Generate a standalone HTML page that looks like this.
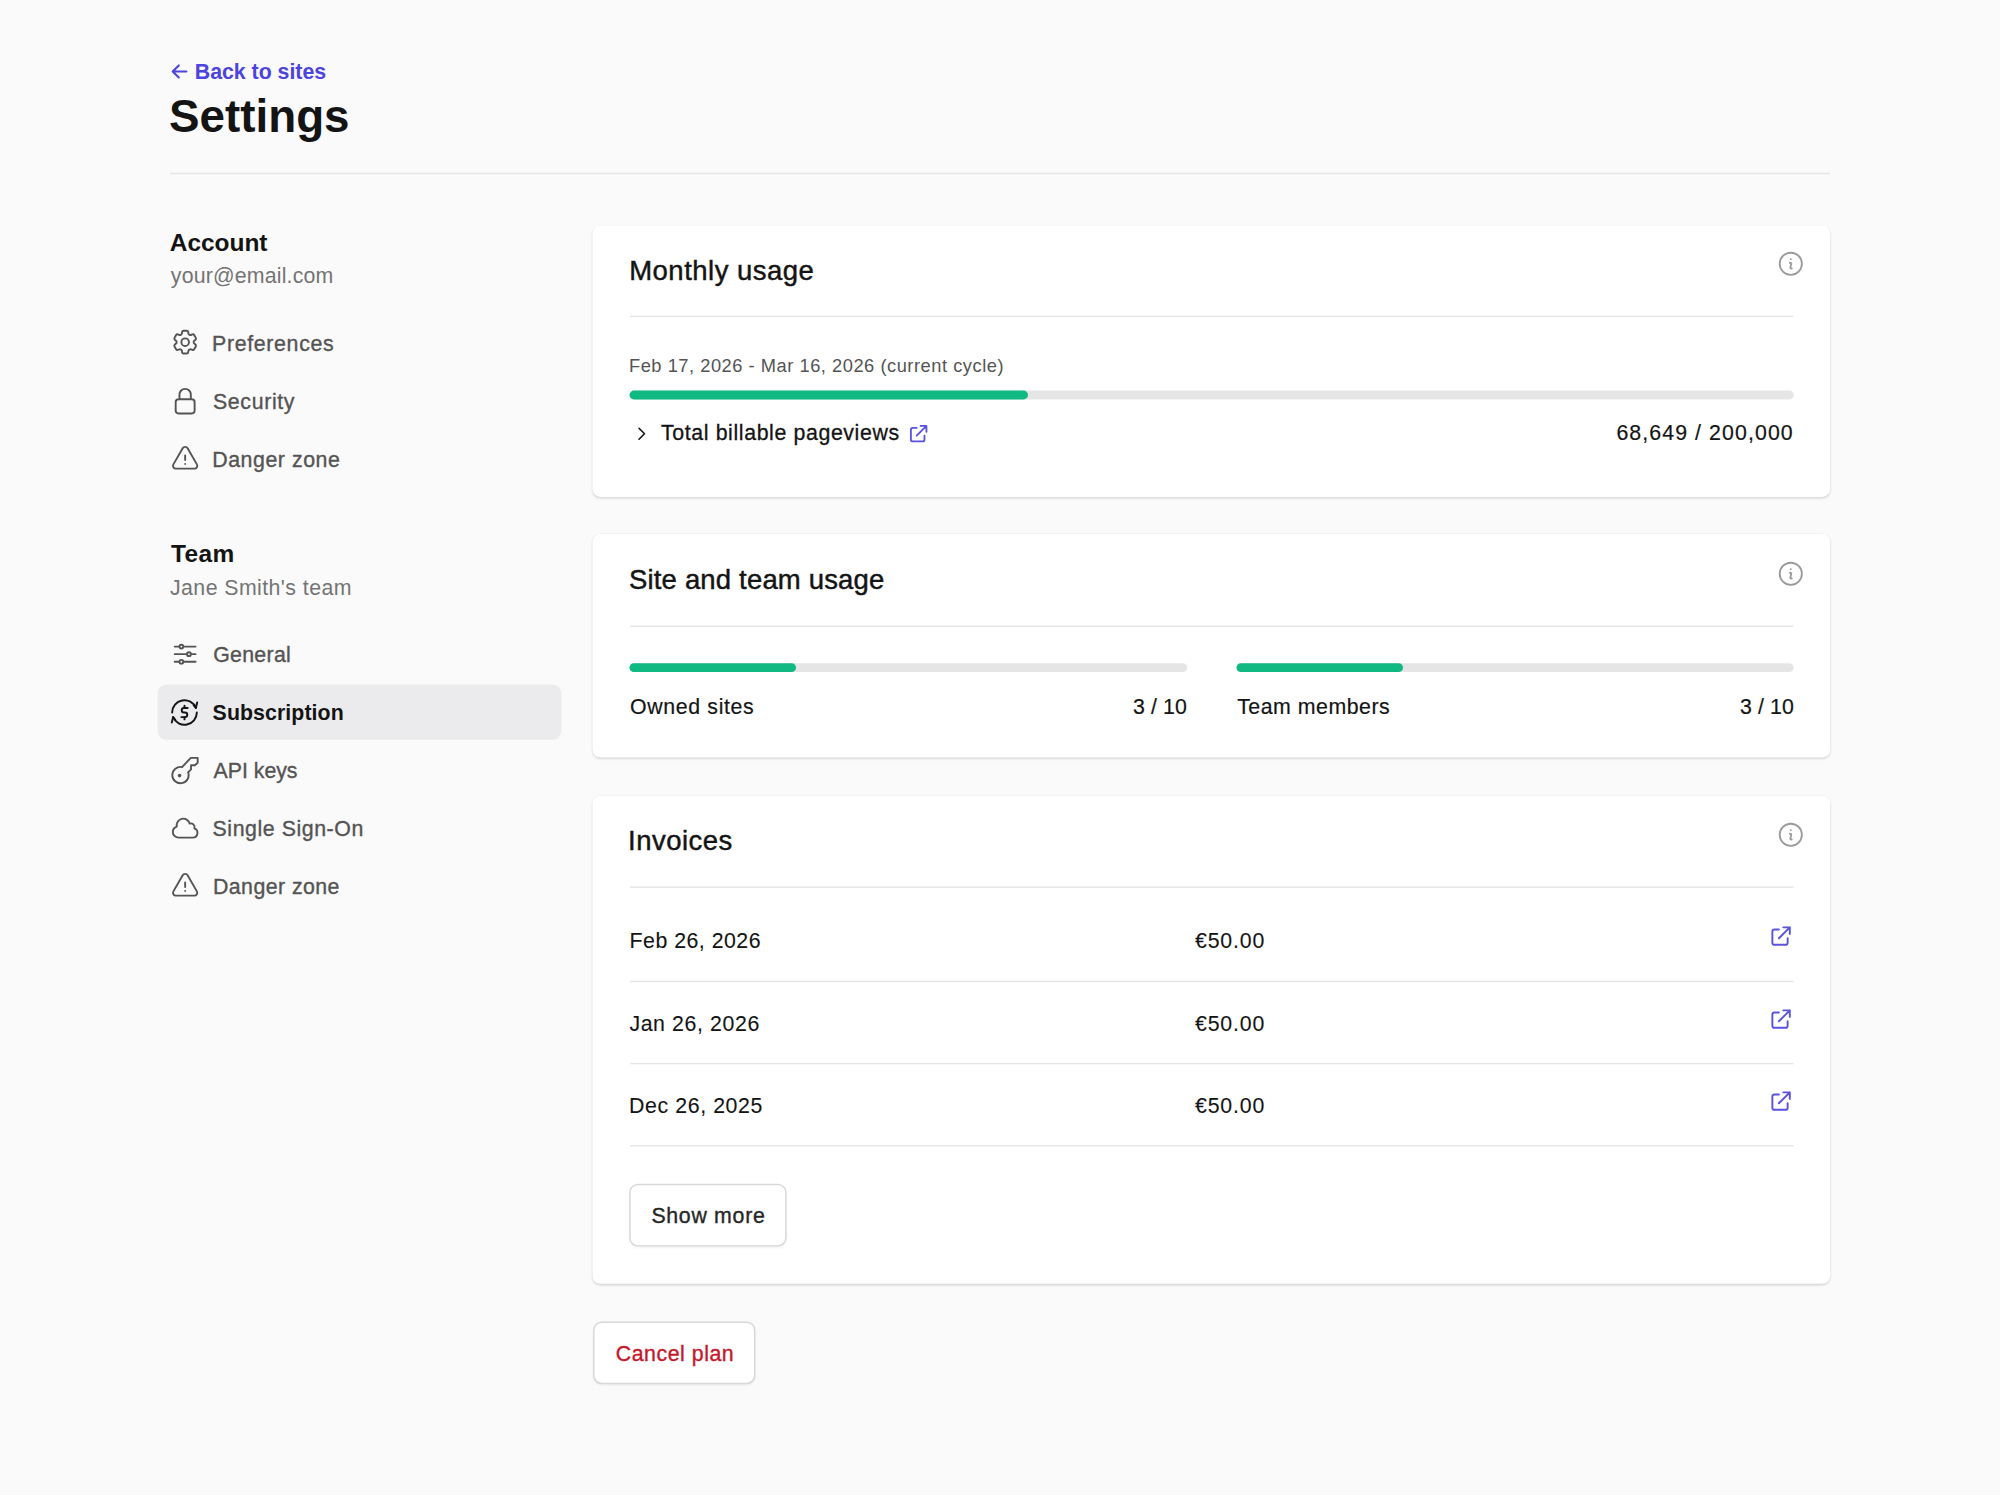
<!DOCTYPE html>
<html lang="en"><head><meta charset="utf-8"><title>Settings</title>
<style>
html,body{margin:0;padding:0}
body{width:2000px;height:1495px;background:#fafafa;position:relative;overflow:hidden;font-family:'Liberation Sans', sans-serif;}
.t{position:absolute;display:block;margin:0;padding:0;white-space:pre;line-height:1;font-family:'Liberation Sans', sans-serif;text-decoration:none;}
svg{position:absolute;overflow:visible}
</style></head><body>
<svg class="bg" width="2000" height="1495" viewBox="0 0 2000 1495" style="left:0;top:0">
<defs><filter id="sh" x="-5%" y="-20%" width="110%" height="140%"><feGaussianBlur stdDeviation="1.1"/></filter></defs>
<rect x="170" y="172.78" width="1660.00" height="1.45" fill="#e5e5e5"/>
<rect x="157.7" y="684.5" width="403.6" height="55.2" rx="8.7" fill="#ebebed"/>
<rect x="592.4" y="227.10" width="1237.90" height="271.40" rx="8" fill="#000" opacity="0.13" filter="url(#sh)"/>
<rect x="591.8" y="224.90" width="1239.10" height="272.60" rx="8.6" fill="#000" opacity="0.035"/>
<rect x="592.4" y="225.5" width="1237.90" height="271.40" rx="8" fill="#fff"/>
<rect x="592.4" y="535.50" width="1237.90" height="223.60" rx="8" fill="#000" opacity="0.13" filter="url(#sh)"/>
<rect x="591.8" y="533.30" width="1239.10" height="224.80" rx="8.6" fill="#000" opacity="0.035"/>
<rect x="592.4" y="533.9" width="1237.90" height="223.60" rx="8" fill="#fff"/>
<rect x="592.4" y="797.30" width="1237.90" height="488.10" rx="8" fill="#000" opacity="0.13" filter="url(#sh)"/>
<rect x="591.8" y="795.10" width="1239.10" height="489.30" rx="8.6" fill="#000" opacity="0.035"/>
<rect x="592.4" y="795.7" width="1237.90" height="488.10" rx="8" fill="#fff"/>
<rect x="630" y="315.67" width="1163.50" height="1.45" fill="#e5e5e5"/>
<rect x="630" y="625.57" width="1163.50" height="1.45" fill="#e5e5e5"/>
<rect x="630" y="886.38" width="1163.50" height="1.45" fill="#e5e5e5"/>
<rect x="630" y="980.67" width="1163.50" height="1.45" fill="#e5e5e5"/>
<rect x="630" y="1062.88" width="1163.50" height="1.45" fill="#e5e5e5"/>
<rect x="630" y="1145.08" width="1163.50" height="1.45" fill="#e5e5e5"/>
<rect x="629.5" y="390.6" width="1164.20" height="8.8" rx="4.4" fill="#e5e5e5"/>
<rect x="629.5" y="390.6" width="398.50" height="8.8" rx="4.4" fill="#10b981"/>
<rect x="629.5" y="663.3" width="557.70" height="8.8" rx="4.4" fill="#e5e5e5"/>
<rect x="629.5" y="663.3" width="166.50" height="8.8" rx="4.4" fill="#10b981"/>
<rect x="1236.5" y="663.3" width="557.20" height="8.8" rx="4.4" fill="#e5e5e5"/>
<rect x="1236.5" y="663.3" width="166.50" height="8.8" rx="4.4" fill="#10b981"/>
<rect x="629.2" y="1185.20" width="157.40" height="62.80" rx="8.7" fill="#000" opacity="0.05" filter="url(#sh)"/>
<rect x="629.93" y="1184.52" width="155.95" height="61.35" rx="7.97" fill="#fff" stroke="#d8d8d8" stroke-width="1.45"/>
<rect x="593.1" y="1322.90" width="162.30" height="62.70" rx="8.7" fill="#000" opacity="0.05" filter="url(#sh)"/>
<rect x="593.83" y="1322.22" width="160.85" height="61.25" rx="7.97" fill="#fff" stroke="#d8d8d8" stroke-width="1.45"/>
</svg>
<!-- back arrow -->
<svg style="left:170px;top:62px" width="19" height="19" viewBox="0 0 19 19" fill="none" stroke="#4c43e0" stroke-width="2.1" stroke-linecap="round" stroke-linejoin="round"><path d="M16.400 9.500H3M8.800 3.400 2.700 9.500l6.100 6.100"/></svg>
<!-- sidebar icons (29px, heroicons outline style) -->
<svg style="left:169.95px;top:327.45px" width="30.3" height="30.3" viewBox="0 0 24 24" fill="none" stroke="#545454" stroke-width="1.5" stroke-linecap="round" stroke-linejoin="round"><path d="M9.594 3.94c.09-.542.56-.94 1.11-.94h2.593c.55 0 1.02.398 1.11.94l.213 1.281c.063.374.313.686.645.87.074.04.147.083.22.127.325.196.72.257 1.075.124l1.217-.456a1.125 1.125 0 0 1 1.37.49l1.296 2.247a1.125 1.125 0 0 1-.26 1.431l-1.003.827c-.293.241-.438.613-.43.992a7.723 7.723 0 0 1 0 .255c-.008.378.137.75.43.991l1.004.827c.424.35.534.955.26 1.43l-1.298 2.247a1.125 1.125 0 0 1-1.369.491l-1.217-.456c-.355-.133-.75-.072-1.076.124a6.47 6.47 0 0 1-.22.128c-.331.183-.581.495-.644.869l-.213 1.281c-.09.543-.56.94-1.11.94h-2.594c-.55 0-1.019-.398-1.11-.94l-.213-1.281c-.062-.374-.312-.686-.644-.87a6.52 6.52 0 0 1-.22-.127c-.325-.196-.72-.257-1.076-.124l-1.217.456a1.125 1.125 0 0 1-1.369-.49l-1.297-2.247a1.125 1.125 0 0 1 .26-1.431l1.004-.827c.292-.24.437-.613.43-.991a6.932 6.932 0 0 1 0-.255c.007-.38-.138-.751-.43-.992l-1.004-.827a1.125 1.125 0 0 1-.26-1.43l1.297-2.247a1.125 1.125 0 0 1 1.37-.491l1.216.456c.356.133.751.072 1.076-.124.072-.044.146-.086.22-.128.332-.183.582-.495.644-.869l.214-1.28Z"/><path d="M15 12a3 3 0 1 1-6 0 3 3 0 0 1 6 0Z"/></svg>
<svg style="left:169.95px;top:385.55px" width="30.3" height="30.3" viewBox="0 0 24 24" fill="none" stroke="#545454" stroke-width="1.5" stroke-linecap="round" stroke-linejoin="round"><path d="M16.5 10.5V6.75a4.5 4.5 0 1 0-9 0v3.75m-.75 11.25h10.5a2.25 2.25 0 0 0 2.25-2.25v-6.75a2.25 2.25 0 0 0-2.25-2.25H6.75a2.25 2.25 0 0 0-2.25 2.25v6.75a2.25 2.25 0 0 0 2.25 2.25Z"/></svg>
<svg style="left:169.95px;top:443.75px" width="30.3" height="30.3" viewBox="0 0 24 24" fill="none" stroke="#545454" stroke-width="1.5" stroke-linecap="round" stroke-linejoin="round"><path d="M12 9v3.75m-9.303 3.376c-.866 1.5.217 3.374 1.948 3.374h14.71c1.73 0 2.813-1.874 1.948-3.374L13.949 3.378c-.866-1.5-3.032-1.5-3.898 0L2.697 16.126ZM12 15.75h.007v.008H12v-.008Z"/></svg>
<svg style="left:169.95px;top:638.55px" width="30.3" height="30.3" viewBox="0 0 24 24" fill="none" stroke="#545454" stroke-width="1.5" stroke-linecap="round" stroke-linejoin="round"><path d="M10.5 6h9.75M10.5 6a1.5 1.5 0 1 1-3 0m3 0a1.5 1.5 0 1 0-3 0M3.75 6H7.5m3 12h9.75m-9.75 0a1.5 1.5 0 0 1-3 0m3 0a1.5 1.5 0 0 0-3 0m-3.75 0H7.5m9-6h3.75m-3.75 0a1.5 1.5 0 0 1-3 0m3 0a1.5 1.5 0 0 0-3 0m-9.75 0h9.75"/></svg>
<!-- subscription icon (custom) -->
<svg style="left:170.3px;top:697.6px" width="29" height="29" viewBox="0 0 24 24" fill="none" stroke="#141414" stroke-width="1.6" stroke-linecap="round" stroke-linejoin="round"><path d="M1.8 12A10.2 10.2 0 0 1 21.4 8.1"/><path d="M22.500 3.700 21.400 8.200 19.600 6"/><path d="M22.2 12A10.2 10.2 0 0 1 2.6 15.9"/><path d="M1.500 20.300 2.600 15.800 4.400 18"/><path d="M14.600 8.200H11.600a1.900 1.900 0 0 0 0 3.800h.8a1.900 1.900 0 0 1 0 3.800H9.400"/><path d="M12 6.300v1.900M12 15.800v1.900"/></svg>
<!-- key icon (custom) -->
<svg style="left:170.3px;top:755.8px" width="29" height="29" viewBox="0 0 24 24" fill="none" stroke="#545454" stroke-width="1.55" stroke-linecap="round" stroke-linejoin="round"><path d="M10 9.200 17.200 1.500H22.900V5.600L20.600 7.700H17.400V11L15 13.500A6.750 6.750 0 1 1 10 9.200Z"/><circle cx="7.900" cy="16.200" r="1.500" fill="#545454" stroke="none"/></svg>
<svg style="left:169.95px;top:812.95px" width="30.3" height="30.3" viewBox="0 0 24 24" fill="none" stroke="#545454" stroke-width="1.5" stroke-linecap="round" stroke-linejoin="round"><path d="M2.25 15a4.5 4.5 0 0 0 4.5 4.500H18a3.750 3.750 0 0 0 1.332-7.257 3 3 0 0 0-3.758-3.848 5.250 5.250 0 0 0-10.233 2.330A4.502 4.502 0 0 0 2.250 15Z"/></svg>
<svg style="left:169.95px;top:871.05px" width="30.3" height="30.3" viewBox="0 0 24 24" fill="none" stroke="#545454" stroke-width="1.5" stroke-linecap="round" stroke-linejoin="round"><path d="M12 9v3.75m-9.303 3.376c-.866 1.5.217 3.374 1.948 3.374h14.71c1.73 0 2.813-1.874 1.948-3.374L13.949 3.378c-.866-1.5-3.032-1.5-3.898 0L2.697 16.126ZM12 15.750h.007v.008H12v-.008Z"/></svg>

<!-- info icons -->
<svg style="left:1776px;top:249.4px" width="29.6" height="29.6" viewBox="0 0 24 24" fill="none" stroke="#9a9a9a" stroke-width="1.5" stroke-linecap="round" stroke-linejoin="round"><path d="m11.25 11.25.041-.02a.75.75 0 0 1 1.063.852l-.708 2.836a.75.75 0 0 0 1.063.853l.041-.021M21 12a9 9 0 1 1-18 0 9 9 0 0 1 18 0Zm-9-3.75h.008v.008H12V8.250Z"/></svg>
<svg style="left:1776px;top:559.4px" width="29.6" height="29.6" viewBox="0 0 24 24" fill="none" stroke="#9a9a9a" stroke-width="1.5" stroke-linecap="round" stroke-linejoin="round"><path d="m11.25 11.25.041-.02a.75.75 0 0 1 1.063.852l-.708 2.836a.75.75 0 0 0 1.063.853l.041-.021M21 12a9 9 0 1 1-18 0 9 9 0 0 1 18 0Zm-9-3.75h.008v.008H12V8.250Z"/></svg>
<svg style="left:1776px;top:820.4px" width="29.6" height="29.6" viewBox="0 0 24 24" fill="none" stroke="#9a9a9a" stroke-width="1.5" stroke-linecap="round" stroke-linejoin="round"><path d="m11.25 11.25.041-.02a.75.75 0 0 1 1.063.852l-.708 2.836a.75.75 0 0 0 1.063.853l.041-.021M21 12a9 9 0 1 1-18 0 9 9 0 0 1 18 0Zm-9-3.75h.008v.008H12V8.250Z"/></svg>

<!-- chevron + external link in card 1 -->
<svg style="left:633px;top:424.5px" width="17.5" height="17.5" viewBox="0 0 24 24" fill="none" stroke="#141414" stroke-width="2.2" stroke-linecap="round" stroke-linejoin="round"><path d="m8.25 4.5 7.5 7.5-7.5 7.5"/></svg>
<svg style="left:907.4px;top:421.6px" width="23.3" height="23.3" viewBox="0 0 24 24" fill="none" stroke="#5a52e0" stroke-width="1.9" stroke-linecap="round" stroke-linejoin="round"><path d="M10 6H6a2 2 0 0 0-2 2v10a2 2 0 0 0 2 2h10a2 2 0 0 0 2-2v-4M14 4h6m0 0v6m0-6L10 14"/></svg>
<!-- invoice link icons -->
<svg style="left:1767.9px;top:923.1px" width="26.2" height="26.2" viewBox="0 0 24 24" fill="none" stroke="#5a52e0" stroke-width="1.75" stroke-linecap="round" stroke-linejoin="round"><path d="M10 6H6a2 2 0 0 0-2 2v10a2 2 0 0 0 2 2h10a2 2 0 0 0 2-2v-4M14 4h6m0 0v6m0-6L10 14"/></svg>
<svg style="left:1767.9px;top:1005.5px" width="26.2" height="26.2" viewBox="0 0 24 24" fill="none" stroke="#5a52e0" stroke-width="1.75" stroke-linecap="round" stroke-linejoin="round"><path d="M10 6H6a2 2 0 0 0-2 2v10a2 2 0 0 0 2 2h10a2 2 0 0 0 2-2v-4M14 4h6m0 0v6m0-6L10 14"/></svg>
<svg style="left:1767.9px;top:1087.9px" width="26.2" height="26.2" viewBox="0 0 24 24" fill="none" stroke="#5a52e0" stroke-width="1.75" stroke-linecap="round" stroke-linejoin="round"><path d="M10 6H6a2 2 0 0 0-2 2v10a2 2 0 0 0 2 2h10a2 2 0 0 0 2-2v-4M14 4h6m0 0v6m0-6L10 14"/></svg>

<header>
<a class="t" style="left:194.80px;top:62px;font-size:21.32px;font-weight:700;color:#4c43e0;letter-spacing:-0.017px;">Back to sites</a>
<h1 class="t" style="left:169.00px;top:94px;font-size:45.78px;font-weight:700;color:#141414;letter-spacing:0.000px;">Settings</h1>
</header>
<nav aria-label="Account settings">
<h3 class="t" style="left:169.80px;top:231px;font-size:24.47px;font-weight:700;color:#141414;letter-spacing:-0.033px;">Account</h3>
<p class="t" style="left:170.80px;top:266px;font-size:21.32px;font-weight:400;color:#747474;letter-spacing:0.177px;">your@email.com</p>
<a class="t" style="left:212.00px;top:334px;font-size:21.32px;font-weight:400;color:#545454;letter-spacing:0.675px;-webkit-text-stroke:0.35px #545454;">Preferences</a>
<a class="t" style="left:213.00px;top:392px;font-size:21.32px;font-weight:400;color:#545454;letter-spacing:0.643px;-webkit-text-stroke:0.35px #545454;">Security</a>
<a class="t" style="left:212.20px;top:450px;font-size:21.32px;font-weight:400;color:#545454;letter-spacing:0.560px;-webkit-text-stroke:0.35px #545454;">Danger zone</a>
</nav>
<nav aria-label="Team settings">
<h3 class="t" style="left:171.00px;top:542px;font-size:24.47px;font-weight:700;color:#141414;letter-spacing:0.367px;">Team</h3>
<p class="t" style="left:170.00px;top:578px;font-size:21.32px;font-weight:400;color:#747474;letter-spacing:0.425px;">Jane Smith's team</p>
<a class="t" style="left:213.20px;top:645px;font-size:21.32px;font-weight:400;color:#545454;letter-spacing:0.300px;-webkit-text-stroke:0.35px #545454;">General</a>
<a class="t" style="left:212.60px;top:703px;font-size:21.32px;font-weight:700;color:#141414;letter-spacing:0.082px;">Subscription</a>
<a class="t" style="left:213.60px;top:761px;font-size:21.32px;font-weight:400;color:#545454;letter-spacing:-0.029px;-webkit-text-stroke:0.35px #545454;">API keys</a>
<a class="t" style="left:212.60px;top:819px;font-size:21.32px;font-weight:400;color:#545454;letter-spacing:0.562px;-webkit-text-stroke:0.35px #545454;">Single Sign-On</a>
<a class="t" style="left:213.00px;top:877px;font-size:21.32px;font-weight:400;color:#545454;letter-spacing:0.440px;-webkit-text-stroke:0.35px #545454;">Danger zone</a>
</nav>
<main>
<section aria-label="Monthly usage">
<h2 class="t" style="left:629.20px;top:257px;font-size:27.51px;font-weight:400;color:#141414;letter-spacing:0.483px;-webkit-text-stroke:0.45px #141414;">Monthly usage</h2>
<p class="t" style="left:629.00px;top:357px;font-size:18.27px;font-weight:400;color:#545454;letter-spacing:0.529px;">Feb 17, 2026 - Mar 16, 2026 (current cycle)</p>
<span class="t" style="left:661.00px;top:423px;font-size:21.32px;font-weight:400;color:#141414;letter-spacing:0.617px;-webkit-text-stroke:0.3px #141414;">Total billable pageviews</span>
<span class="t" style="left:1616.40px;top:423px;font-size:21.32px;font-weight:400;color:#141414;letter-spacing:1.087px;-webkit-text-stroke:0.2px #141414;">68,649 / 200,000</span>
</section>
<section aria-label="Site and team usage">
<h2 class="t" style="left:629.00px;top:566px;font-size:27.51px;font-weight:400;color:#141414;letter-spacing:0.172px;-webkit-text-stroke:0.45px #141414;">Site and team usage</h2>
<span class="t" style="left:630.00px;top:697px;font-size:21.32px;font-weight:400;color:#141414;letter-spacing:0.650px;-webkit-text-stroke:0.2px #141414;">Owned sites</span>
<span class="t" style="left:1133.00px;top:697px;font-size:21.32px;font-weight:400;color:#141414;letter-spacing:0.100px;-webkit-text-stroke:0.2px #141414;">3 / 10</span>
<span class="t" style="left:1237.20px;top:697px;font-size:21.32px;font-weight:400;color:#141414;letter-spacing:0.518px;-webkit-text-stroke:0.2px #141414;">Team members</span>
<span class="t" style="left:1740.00px;top:697px;font-size:21.32px;font-weight:400;color:#141414;letter-spacing:0.100px;-webkit-text-stroke:0.2px #141414;">3 / 10</span>
</section>
<section aria-label="Invoices">
<h2 class="t" style="left:628.00px;top:827px;font-size:27.51px;font-weight:400;color:#141414;letter-spacing:0.486px;-webkit-text-stroke:0.45px #141414;">Invoices</h2>
<span class="t" style="left:629.60px;top:931px;font-size:21.32px;font-weight:400;color:#141414;letter-spacing:0.482px;-webkit-text-stroke:0.1px #141414;">Feb 26, 2026</span>
<span class="t" style="left:1195.00px;top:931px;font-size:21.32px;font-weight:400;color:#141414;letter-spacing:0.820px;-webkit-text-stroke:0.1px #141414;">€50.00</span>
<span class="t" style="left:629.40px;top:1014px;font-size:21.32px;font-weight:400;color:#141414;letter-spacing:0.600px;-webkit-text-stroke:0.1px #141414;">Jan 26, 2026</span>
<span class="t" style="left:1195.00px;top:1014px;font-size:21.32px;font-weight:400;color:#141414;letter-spacing:0.820px;-webkit-text-stroke:0.1px #141414;">€50.00</span>
<span class="t" style="left:629.00px;top:1096px;font-size:21.32px;font-weight:400;color:#141414;letter-spacing:0.600px;-webkit-text-stroke:0.1px #141414;">Dec 26, 2025</span>
<span class="t" style="left:1195.00px;top:1096px;font-size:21.32px;font-weight:400;color:#141414;letter-spacing:0.820px;-webkit-text-stroke:0.1px #141414;">€50.00</span>
<a class="t" style="left:651.40px;top:1206px;font-size:21.32px;font-weight:400;color:#262626;letter-spacing:0.700px;-webkit-text-stroke:0.35px #262626;">Show more</a>
</section>
<section aria-label="Plan actions">
<a class="t" style="left:615.80px;top:1344px;font-size:21.32px;font-weight:400;color:#c4182c;letter-spacing:0.530px;-webkit-text-stroke:0.35px #c4182c;">Cancel plan</a>
</section>
</main>
</body></html>
